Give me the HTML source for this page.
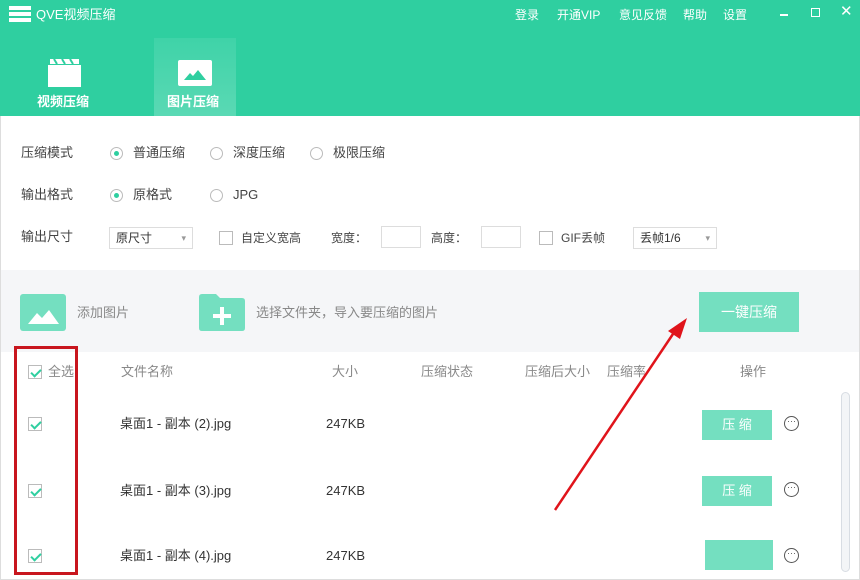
<!DOCTYPE html>
<html><head><meta charset="utf-8"><style>
*{margin:0;padding:0;box-sizing:border-box}
body{width:860px;height:580px;overflow:hidden;background:#fff;font-family:"Liberation Sans","Noto Sans CJK SC",sans-serif;font-size:13px;color:#444;position:relative}
.a{position:absolute;white-space:nowrap;line-height:16px}
.hdr{position:absolute;left:0;top:0;width:860px;height:116px;background:#2fcfa0}
.tab{position:absolute;left:154px;top:38px;width:82px;height:78px;background:linear-gradient(#3fd3a8,#5ad9b4)}
.radio{position:absolute;width:13px;height:13px;border:1px solid #bbb;border-radius:50%;background:#fff}
.radio.on::after{content:"";position:absolute;left:3px;top:3px;width:5px;height:5px;border-radius:50%;background:#2fcfa0}
.cb{position:absolute;width:14px;height:14px;border:1px solid #bbb;background:#fff}
.cb.on::after{content:"";position:absolute;left:4px;top:1px;width:4px;height:8px;border:solid #2fcfa0;border-width:0 2px 2px 0;transform:rotate(45deg)}
.sel{position:absolute;height:22px;border:1px solid #ddd;background:#fff;font-size:12px;padding:0 6px;line-height:20px;color:#333}
.sel::after{content:"▾";position:absolute;right:6px;top:0;font-size:9px;color:#999}
.inp{position:absolute;width:40px;height:22px;border:1px solid #ddd;background:#fff}
.btn{position:absolute;background:#74dfc0;color:#fff;text-align:center}
.dots{position:absolute;width:15px;height:15px;border:1.3px solid #555;border-radius:50%;font-size:9px;line-height:9px;text-align:center;color:#555}
</style></head><body>
<div class="hdr"></div>
<div class="tab"></div>
<svg class="a" style="left:9px;top:6px" width="22" height="16"><rect x="0" y="0" width="22" height="4" fill="#fff"/><rect x="0" y="6" width="22" height="4" fill="#fff"/><rect x="0" y="12" width="22" height="4" fill="#fff"/></svg>
<div class="a" style="left:36px;top:7px;color:#fff;font-size:13px">QVE视频压缩</div>
<div class="a" style="left:515px;top:7px;color:#fff;font-size:12px">登录</div>
<div class="a" style="left:557px;top:7px;color:#fff;font-size:12px">开通VIP</div>
<div class="a" style="left:619px;top:7px;color:#fff;font-size:12px">意见反馈</div>
<div class="a" style="left:683px;top:7px;color:#fff;font-size:12px">帮助</div>
<div class="a" style="left:723px;top:7px;color:#fff;font-size:12px">设置</div>
<div class="a" style="left:780px;top:14px;width:8px;height:2px;background:#fff"></div>
<div class="a" style="left:811px;top:8px;width:9px;height:9px;border:1px solid #fff"></div>
<div class="a" style="left:840px;top:4px;color:#fff;font-size:15px">✕</div>
<svg class="a" style="left:48px;top:59px" width="33" height="28"><path d="M0 6H33V28H0Z" fill="#fff"/><path d="M2 0H31V5H2Z" fill="#fff"/><path d="M6 0L9 5M14 0L17 5M22 0L25 5" stroke="#2fcfa0" stroke-width="2"/></svg>
<div class="a" style="left:37px;top:94px;color:#fff;font-size:13px;font-weight:bold">视频压缩</div>
<svg class="a" style="left:178px;top:60px" width="34" height="26"><rect width="34" height="26" rx="2" fill="#fff"/><path d="M6 20L12 13L15 16L20 10L28 20Z" fill="#2fcfa0"/></svg>
<div class="a" style="left:167px;top:94px;color:#fff;font-size:13px;font-weight:bold">图片压缩</div>

<div class="a" style="left:21px;top:145px">压缩模式</div>
<div class="radio on" style="left:110px;top:147px"></div><div class="a" style="left:133px;top:145px">普通压缩</div>
<div class="radio" style="left:210px;top:147px"></div><div class="a" style="left:233px;top:145px">深度压缩</div>
<div class="radio" style="left:310px;top:147px"></div><div class="a" style="left:333px;top:145px">极限压缩</div>
<div class="a" style="left:21px;top:187px">输出格式</div>
<div class="radio on" style="left:110px;top:189px"></div><div class="a" style="left:133px;top:187px">原格式</div>
<div class="radio" style="left:210px;top:189px"></div><div class="a" style="left:233px;top:187px">JPG</div>
<div class="a" style="left:21px;top:229px">输出尺寸</div>
<div class="sel" style="left:109px;top:227px;width:84px">原尺寸</div>
<div class="cb" style="left:219px;top:231px"></div><div class="a" style="left:241px;top:230px;font-size:12px">自定义宽高</div>
<div class="a" style="left:331px;top:230px;font-size:12px">宽度：</div><div class="inp" style="left:381px;top:226px"></div>
<div class="a" style="left:431px;top:230px;font-size:12px">高度：</div><div class="inp" style="left:481px;top:226px"></div>
<div class="cb" style="left:539px;top:231px"></div><div class="a" style="left:561px;top:230px;font-size:12px">GIF丢帧</div>
<div class="sel" style="left:633px;top:227px;width:84px">丢帧1/6</div>

<div class="a" style="left:0;top:270px;width:860px;height:82px;background:#f5f6f8"></div>
<svg class="a" style="left:20px;top:294px" width="46" height="37"><rect width="46" height="37" rx="3" fill="#74dfc0"/><path d="M8 30L17 19L22 24L29 16L39 30Z" fill="#fff"/></svg>
<div class="a" style="left:77px;top:305px;color:#888">添加图片</div>
<svg class="a" style="left:199px;top:294px" width="46" height="37"><path d="M0 3Q0 0 3 0H17L21 4H43Q46 4 46 7V34Q46 37 43 37H3Q0 37 0 34Z" fill="#74dfc0"/><path d="M23 13V31M14 22H32" stroke="#fff" stroke-width="4"/></svg>
<div class="a" style="left:256px;top:305px;color:#888">选择文件夹，导入要压缩的图片</div>
<div class="btn" style="left:699px;top:292px;width:100px;height:40px;line-height:40px;font-size:14px">一键压缩</div>

<div class="cb on" style="left:28px;top:365px"></div><div class="a" style="left:48px;top:364px;color:#888">全选</div>
<div class="a" style="left:121px;top:364px;color:#888">文件名称</div>
<div class="a" style="left:332px;top:364px;color:#888">大小</div>
<div class="a" style="left:421px;top:364px;color:#888">压缩状态</div>
<div class="a" style="left:525px;top:364px;color:#888">压缩后大小</div>
<div class="a" style="left:607px;top:364px;color:#888">压缩率</div>
<div class="a" style="left:740px;top:364px;color:#888">操作</div>

<div class="cb on" style="left:28px;top:417px"></div><div class="a" style="left:120px;top:416px;color:#333">桌面1 - 副本 (2).jpg</div><div class="a" style="left:326px;top:416px;color:#333">247KB</div>
<div class="btn" style="left:702px;top:410px;width:70px;height:30px;line-height:30px">压 缩</div><div class="dots" style="left:784px;top:416px">···</div>
<div class="cb on" style="left:28px;top:484px"></div><div class="a" style="left:120px;top:483px;color:#333">桌面1 - 副本 (3).jpg</div><div class="a" style="left:326px;top:483px;color:#333">247KB</div>
<div class="btn" style="left:702px;top:476px;width:70px;height:30px;line-height:30px">压 缩</div><div class="dots" style="left:784px;top:482px">···</div>
<div class="cb on" style="left:28px;top:549px"></div><div class="a" style="left:120px;top:548px;color:#333">桌面1 - 副本 (4).jpg</div><div class="a" style="left:326px;top:548px;color:#333">247KB</div>
<div class="btn" style="left:705px;top:540px;width:68px;height:30px"></div><div class="dots" style="left:784px;top:548px">···</div>
<div class="a" style="left:841px;top:392px;width:9px;height:180px;border:1px solid #d8dde3;border-radius:5px;background:#f3f5f7"></div>
<div class="a" style="left:0;top:116px;width:1px;height:464px;background:#ddd"></div>
<div class="a" style="left:859px;top:116px;width:1px;height:464px;background:#ddd"></div>
<div class="a" style="left:0;top:579px;width:860px;height:1px;background:#ddd"></div>

<div class="a" style="left:14px;top:346px;width:64px;height:229px;border:3px solid #c8161e"></div>
<svg class="a" style="left:0;top:0" width="860" height="580"><line x1="555" y1="510" x2="677" y2="328" stroke="#e0141b" stroke-width="2.5"/><path d="M687 318L668 331L680 339Z" fill="#e0141b"/></svg>
</body></html>
